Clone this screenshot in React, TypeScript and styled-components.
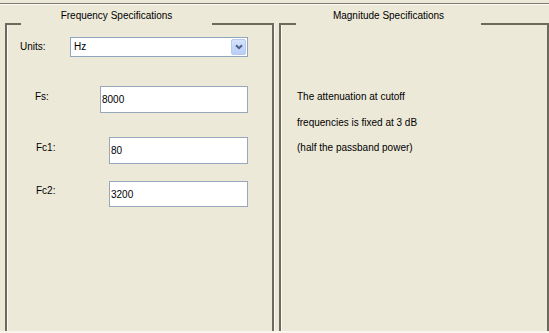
import React from 'react'
import styled, { createGlobalStyle } from 'styled-components'

const GlobalStyle = createGlobalStyle`
  html, body {
    margin: 0;
    padding: 0;
    background: #ece9d8;
  }
  body {
    font-family: "Liberation Sans", Arial, sans-serif;
    font-size: 10px;
    color: #000;
  }
  #root {
    width: 549px;
    height: 333px;
    overflow: hidden;
  }
`

const LINE = '#6b6a5d'
const HIGHLIGHT = '#faf9f2'

const Window = styled.div`
  width: 549px;
  height: 333px;
  background: #ece9d8;
  display: flex;
  flex-direction: column;
`

const TopRule = styled.div`
  flex: none;
  margin-top: 3px;
  height: 1px;
  background: #7c7a6d;
  border-bottom: 1px solid ${HIGHLIGHT};
`

const Panels = styled.div`
  flex: 1;
  min-height: 0;
  display: flex;
  gap: 5px;
  padding-left: 5px;
`

const BottomRule = styled.div`
  flex: none;
  height: 2px;
  background: #f7f5ec;
`

const Group = styled.section<{ $width: number }>`
  flex: none;
  width: ${({ $width }) => $width}px;
  display: flex;
  flex-direction: column;
`

const GroupHeader = styled.div`
  flex: none;
  display: flex;
  height: 20px;
`

const Edge = styled.div<{ $width?: number }>`
  border-bottom: 2px solid ${LINE};
  ${({ $width }) => ($width ? `width: ${$width}px; flex: none;` : 'flex: 1;')}
`

const Caption = styled.div<{ $width: number }>`
  flex: none;
  width: ${({ $width }) => $width}px;
  padding-top: 5px;
  line-height: 12px;
  text-align: center;
  white-space: nowrap;
`

const Frame = styled.div`
  flex: 1;
  border-left: 2px solid ${LINE};
  border-right: 2px solid ${LINE};
  box-shadow: inset 1px 0 0 ${HIGHLIGHT}, 1px 0 0 ${HIGHLIGHT};
`

const Field = styled.div<{ $top: number; $indent: number }>`
  display: flex;
  align-items: center;
  margin-top: ${({ $top }) => $top}px;
  padding-left: ${({ $indent }) => $indent}px;
`

const FieldLabel = styled.span<{ $width: number; $lift?: number }>`
  flex: none;
  width: ${({ $width }) => $width}px;
  line-height: 12px;
  margin-bottom: ${({ $lift = 0 }) => $lift * 2}px;
`

const TextBox = styled.input<{ $width: number; $height: number }>`
  box-sizing: border-box;
  width: ${({ $width }) => $width}px;
  height: ${({ $height }) => $height}px;
  margin: 0;
  padding: 0 0 0 1px;
  border: 1px solid #98a8ba;
  background: #fff;
  font-family: "Liberation Sans", Arial, sans-serif;
  font-size: 10px;
  color: #000;
  outline: none;
`

const Select = styled.div<{ $width: number }>`
  box-sizing: border-box;
  width: ${({ $width }) => $width}px;
  height: 20px;
  display: flex;
  align-items: center;
  padding: 1px;
  border: 1px solid #8fa4bd;
  background: #fff;
`

const SelectValue = styled.span`
  flex: 1;
  padding-left: 2px;
  line-height: 12px;
`

const DropButton = styled.span`
  box-sizing: border-box;
  flex: none;
  width: 15px;
  height: 16px;
  display: flex;
  align-items: center;
  justify-content: center;
  border: 1px solid #b7c9ef;
  border-radius: 2px;
  background: linear-gradient(#d6e2fc, #b9cdf7);
`

const Note = styled.div`
  padding: 59px 0 0 16px;
  line-height: 25.5px;
`

const Chevron = () => (
  <svg width="8" height="6" viewBox="0 0 8 6">
    <path d="M1 1.2 L4 4.2 L7 1.2" fill="none" stroke="#4d6185" strokeWidth="2" />
  </svg>
)

const App: React.FC = () => (
  <Window>
    <GlobalStyle />
    <TopRule />
    <Panels>
      <Group $width={269}>
        <GroupHeader>
          <Edge $width={16} />
          <Caption $width={191}>Frequency Specifications</Caption>
          <Edge />
        </GroupHeader>
        <Frame>
          <Field $top={12} $indent={13}>
            <FieldLabel $width={50}>Units:</FieldLabel>
            <Select $width={178}>
              <SelectValue>Hz</SelectValue>
              <DropButton>
                <Chevron />
              </DropButton>
            </Select>
          </Field>
          <Field $top={29} $indent={28}>
            <FieldLabel $width={65} $lift={3}>Fs:</FieldLabel>
            <TextBox $width={148} $height={27} defaultValue="8000" />
          </Field>
          <Field $top={24} $indent={29}>
            <FieldLabel $width={73} $lift={3}>Fc1:</FieldLabel>
            <TextBox $width={139} $height={27} defaultValue="80" />
          </Field>
          <Field $top={17} $indent={29}>
            <FieldLabel $width={73} $lift={3}>Fc2:</FieldLabel>
            <TextBox $width={139} $height={26} defaultValue="3200" />
          </Field>
        </Frame>
      </Group>
      <Group $width={270}>
        <GroupHeader>
          <Edge $width={17} />
          <Caption $width={185}>Magnitude Specifications</Caption>
          <Edge />
        </GroupHeader>
        <Frame>
          <Note>
            <div>The attenuation at cutoff</div>
            <div>frequencies is fixed at 3 dB</div>
            <div>(half the passband power)</div>
          </Note>
        </Frame>
      </Group>
    </Panels>
    <BottomRule />
  </Window>
)

export default App
